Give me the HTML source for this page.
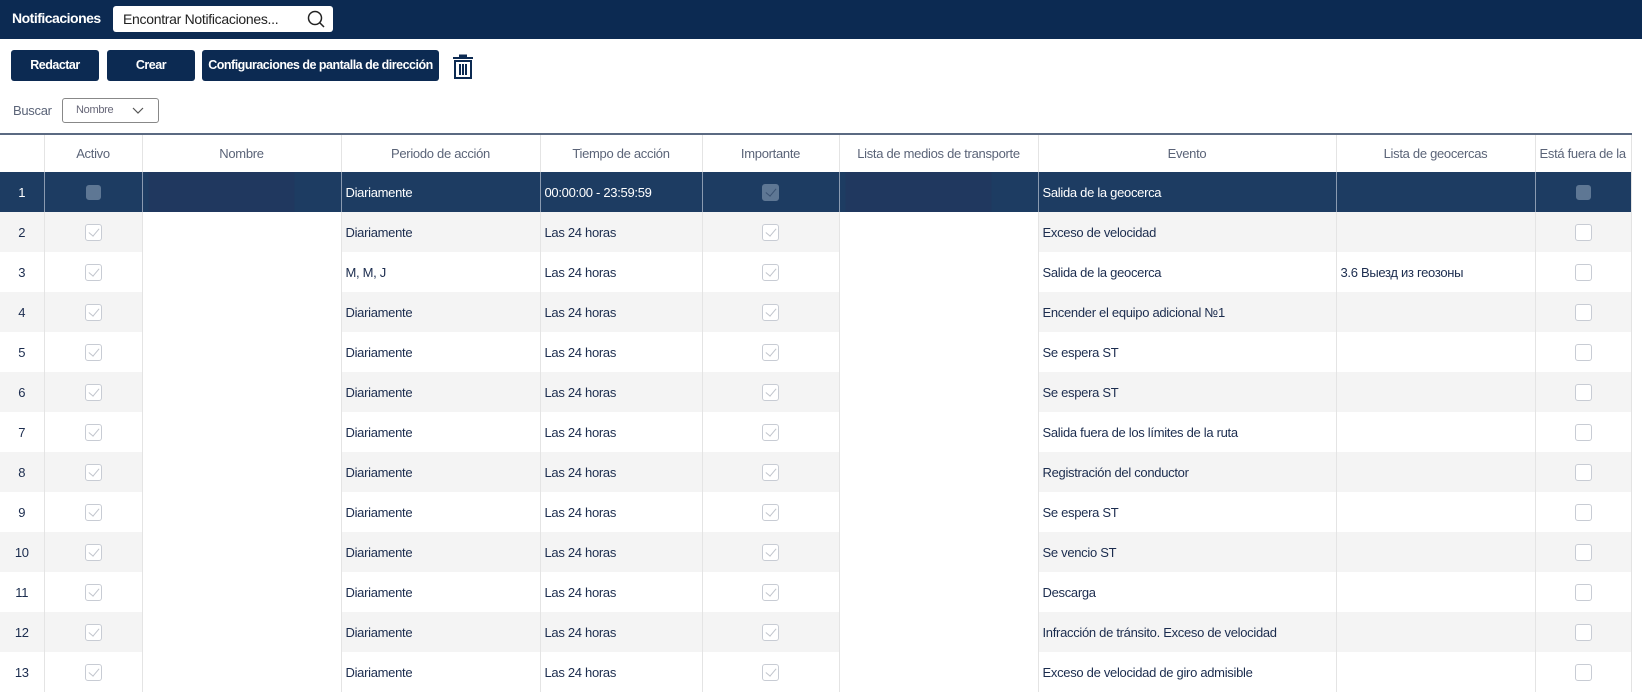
<!DOCTYPE html>
<html><head><meta charset="utf-8"><style>
*{box-sizing:border-box;margin:0;padding:0}
body{width:1642px;height:693px;background:#fff;font-family:"Liberation Sans Narrow","Liberation Sans",sans-serif;color:#1b2c4e;position:relative;overflow:hidden;font-size:13px;letter-spacing:-0.3px}
.top{position:absolute;left:0;top:0;width:1642px;height:39px;background:#0c2a52}
.top .t{position:absolute;left:12px;top:10px;color:#fff;font-size:14px;font-weight:bold;letter-spacing:-0.5px}
.sb{position:absolute;left:113px;top:6px;width:220px;height:26px;background:#fff;border-radius:3px;font-size:14px;padding:5px 10px;color:#222}
.btn{position:absolute;top:50px;height:31px;background:#0c2a52;color:#fff;border-radius:3px;font-size:12.5px;font-weight:bold;text-align:center;line-height:31px;letter-spacing:-0.5px;white-space:nowrap}
.sel{position:absolute;left:62px;top:98px;width:97px;height:25px;border:1px solid #888;border-radius:3px;font-size:11px;color:#667;padding:5px 13px}
table{position:absolute;left:0;top:133px;border-collapse:collapse;table-layout:fixed;width:1631px;border-top:2px solid #5b6a82;border-right:1px solid #e3e3e3}
td,th{height:40px;border-left:1px solid #e4e4e4;white-space:nowrap;overflow:hidden;font-size:13px;padding:0 4px}
th{font-weight:normal;color:#5b6478;height:38px}
tr.s td{background:#1d3c62;color:#fff;border-left-color:#8a9ab0}
tr.g td{background:#f4f4f4}
td.c{text-align:center}
td.w{background:#fff!important}
tr.s td.d{background:linear-gradient(90deg,#1d3c62 0 6px,#20385f 6px 152px,#1d3c62 152px)!important}
.cb{display:inline-block;width:17px;height:17px;border:1px solid #c8ccd4;border-radius:3px;vertical-align:middle;position:relative;background:#fff}
.cb.k::after{content:"";position:absolute;left:5px;top:1px;width:5px;height:9px;border:solid #c0c4cc;border-width:0 1px 1px 0;transform:rotate(40deg)}
.cb.f{background:#5e7794;border-color:#5e7794}
.cb.f::after{border-color:#3a5272}
</style></head><body>
<div class="top"><div class="t">Notificaciones</div><div class="sb">Encontrar Notificaciones...
<svg style="position:absolute;right:8px;top:4px" width="18" height="18" viewBox="0 0 18 18"><circle cx="8" cy="8" r="6.5" fill="none" stroke="#222" stroke-width="1.5"/><line x1="12.5" y1="12.5" x2="17" y2="17" stroke="#222" stroke-width="1.5"/></svg></div></div>
<div class="btn" style="left:11px;width:88px">Redactar</div>
<div class="btn" style="left:107px;width:88px">Crear</div>
<div class="btn" style="left:202px;width:237px">Configuraciones de pantalla de dirección</div>
<svg style="position:absolute;left:452px;top:54px" width="22" height="25" viewBox="0 0 22 25"><rect x="1" y="3" width="20" height="2" fill="#0c2a52"/><rect x="7" y="0.5" width="8" height="2.5" fill="#0c2a52"/><rect x="3" y="7" width="16" height="17" fill="none" stroke="#0c2a52" stroke-width="2"/><rect x="7" y="10" width="2" height="11" fill="#0c2a52"/><rect x="10" y="10" width="2" height="11" fill="#0c2a52"/><rect x="13" y="10" width="2" height="11" fill="#0c2a52"/></svg>
<div style="position:absolute;left:13px;top:103px;font-size:13px;color:#5b6478">Buscar</div>
<div class="sel">Nombre<svg style="position:absolute;right:14px;top:8px" width="12" height="8"><polyline points="1,1 6,6 11,1" fill="none" stroke="#555" stroke-width="1.2"/></svg></div>
<table>
<colgroup><col style="width:44px"><col style="width:98px"><col style="width:199px"><col style="width:199px"><col style="width:162px"><col style="width:137px"><col style="width:199px"><col style="width:298px"><col style="width:199px"><col style="width:96px"></colgroup>
<tr><th style="border-left:none"></th><th>Activo</th><th>Nombre</th><th>Periodo de acción</th><th>Tiempo de acción</th><th>Importante</th><th>Lista de medios de transporte</th><th>Evento</th><th>Lista de geocercas</th><th style="text-align:left">Está fuera de la</th></tr>
<tr class="s"><td class="c" style="border-left:none">1</td><td class="c"><span class="cb f" style="width:15px;height:15px"></span></td><td class="d"></td><td>Diariamente</td><td>00:00:00 - 23:59:59</td><td class="c"><span class="cb k f"></span></td><td class="d"></td><td>Salida de la geocerca</td><td></td><td class="c"><span class="cb f" style="width:15px;height:15px"></span></td></tr>
<tr class="g"><td class="c" style="border-left:none">2</td><td class="c"><span class="cb k"></span></td><td class="w"></td><td>Diariamente</td><td>Las 24 horas</td><td class="c"><span class="cb k"></span></td><td class="w"></td><td>Exceso de velocidad</td><td></td><td class="c"><span class="cb"></span></td></tr>
<tr><td class="c" style="border-left:none">3</td><td class="c"><span class="cb k"></span></td><td class="w"></td><td>M, M, J</td><td>Las 24 horas</td><td class="c"><span class="cb k"></span></td><td class="w"></td><td>Salida de la geocerca</td><td>3.6 Выезд из геозоны</td><td class="c"><span class="cb"></span></td></tr>
<tr class="g"><td class="c" style="border-left:none">4</td><td class="c"><span class="cb k"></span></td><td class="w"></td><td>Diariamente</td><td>Las 24 horas</td><td class="c"><span class="cb k"></span></td><td class="w"></td><td>Encender el equipo adicional №1</td><td></td><td class="c"><span class="cb"></span></td></tr>
<tr><td class="c" style="border-left:none">5</td><td class="c"><span class="cb k"></span></td><td class="w"></td><td>Diariamente</td><td>Las 24 horas</td><td class="c"><span class="cb k"></span></td><td class="w"></td><td>Se espera ST</td><td></td><td class="c"><span class="cb"></span></td></tr>
<tr class="g"><td class="c" style="border-left:none">6</td><td class="c"><span class="cb k"></span></td><td class="w"></td><td>Diariamente</td><td>Las 24 horas</td><td class="c"><span class="cb k"></span></td><td class="w"></td><td>Se espera ST</td><td></td><td class="c"><span class="cb"></span></td></tr>
<tr><td class="c" style="border-left:none">7</td><td class="c"><span class="cb k"></span></td><td class="w"></td><td>Diariamente</td><td>Las 24 horas</td><td class="c"><span class="cb k"></span></td><td class="w"></td><td>Salida fuera de los límites de la ruta</td><td></td><td class="c"><span class="cb"></span></td></tr>
<tr class="g"><td class="c" style="border-left:none">8</td><td class="c"><span class="cb k"></span></td><td class="w"></td><td>Diariamente</td><td>Las 24 horas</td><td class="c"><span class="cb k"></span></td><td class="w"></td><td>Registración del conductor</td><td></td><td class="c"><span class="cb"></span></td></tr>
<tr><td class="c" style="border-left:none">9</td><td class="c"><span class="cb k"></span></td><td class="w"></td><td>Diariamente</td><td>Las 24 horas</td><td class="c"><span class="cb k"></span></td><td class="w"></td><td>Se espera ST</td><td></td><td class="c"><span class="cb"></span></td></tr>
<tr class="g"><td class="c" style="border-left:none">10</td><td class="c"><span class="cb k"></span></td><td class="w"></td><td>Diariamente</td><td>Las 24 horas</td><td class="c"><span class="cb k"></span></td><td class="w"></td><td>Se vencio ST</td><td></td><td class="c"><span class="cb"></span></td></tr>
<tr><td class="c" style="border-left:none">11</td><td class="c"><span class="cb k"></span></td><td class="w"></td><td>Diariamente</td><td>Las 24 horas</td><td class="c"><span class="cb k"></span></td><td class="w"></td><td>Descarga</td><td></td><td class="c"><span class="cb"></span></td></tr>
<tr class="g"><td class="c" style="border-left:none">12</td><td class="c"><span class="cb k"></span></td><td class="w"></td><td>Diariamente</td><td>Las 24 horas</td><td class="c"><span class="cb k"></span></td><td class="w"></td><td>Infracción de tránsito. Exceso de velocidad</td><td></td><td class="c"><span class="cb"></span></td></tr>
<tr><td class="c" style="border-left:none">13</td><td class="c"><span class="cb k"></span></td><td class="w"></td><td>Diariamente</td><td>Las 24 horas</td><td class="c"><span class="cb k"></span></td><td class="w"></td><td>Exceso de velocidad de giro admisible</td><td></td><td class="c"><span class="cb"></span></td></tr>
</table>
</body></html>
